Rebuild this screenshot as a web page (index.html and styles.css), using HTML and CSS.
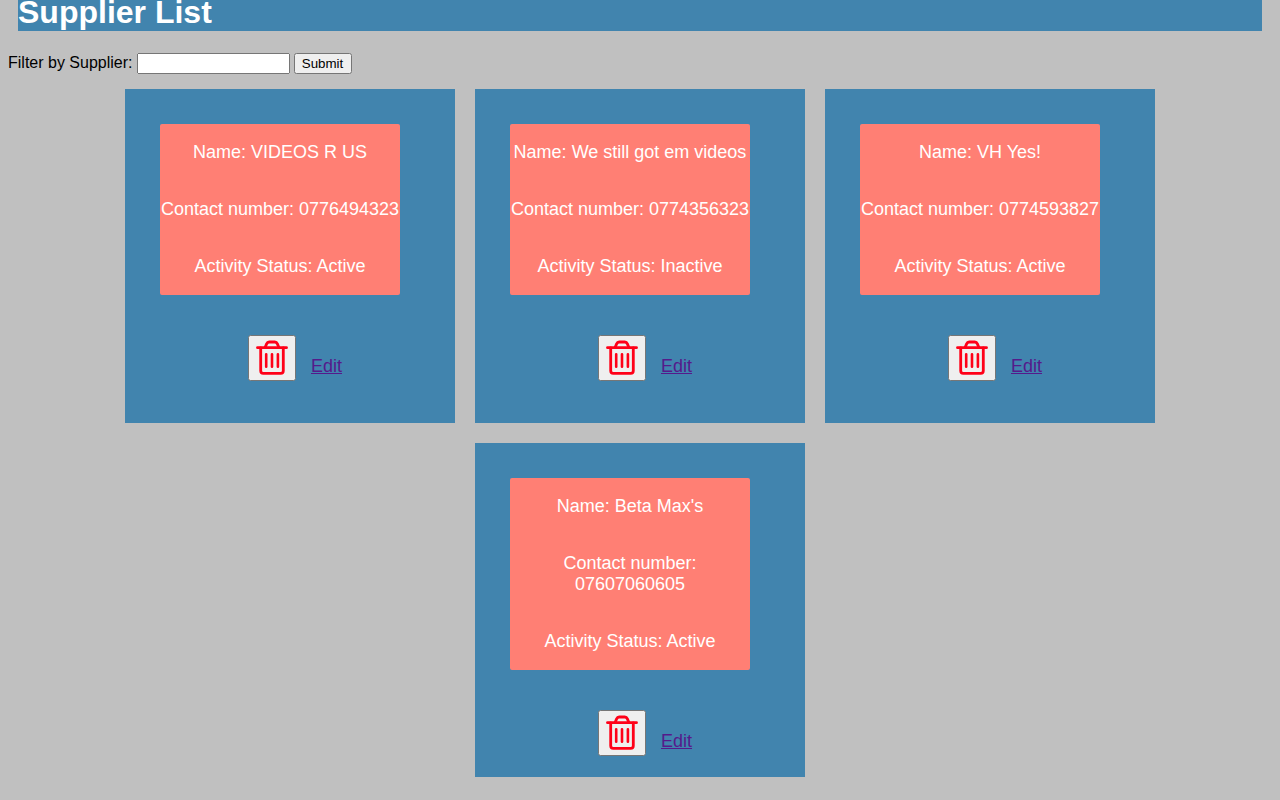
FILE: index.html
```html
<!DOCTYPE html>
<html lang="en">
<head>
<meta charset="utf-8">
<title>Supplier List</title>
<link rel="stylesheet" href="styles.css">
</head>
<body>
<svg class="sprite" aria-hidden="true">
  <symbol id="trash" viewBox="0 0 32 36">
    <g fill="none" stroke="#ff0018" stroke-linecap="round" stroke-width="2.8">
      <path d="M1.5 7.7H30.5"/>
      <path d="M9.2 7.2L10.6 3.9Q11.4 2 13.2 2H18.8Q20.6 2 21.400 3.900L22.800 7.200"/>
      <path d="M4.700 8V30.700Q4.700 33.300 7.300 33.300H24.700Q27.300 33.300 27.300 30.700V8"/>
      <path d="M10.200 14.300V26.800M16 14.300V26.800M21.900 14.300V26.800" stroke-width="2.600"/>
    </g>
  </symbol>
</svg>
<h1 class="page-title">Supplier List</h1>
<form class="filter">
  <label for="supplier">Filter by Supplier:</label>
  <input class="filter-input" id="supplier" type="text">
  <button class="filter-submit" type="button">Submit</button>
</form>
<main class="cards">
  <article class="card">
    <div class="details">
      <p>Name: VIDEOS R US</p>
      <p>Contact number: 0776494323</p>
      <p>Activity Status: Active</p>
    </div>
    <div class="actions">
      <button class="delete" type="button" aria-label="Delete"><svg class="icon"><use href="#trash"/></svg></button>
      <a class="edit" href="#">Edit</a>
    </div>
  </article>
  <article class="card">
    <div class="details">
      <p>Name: We still got em videos</p>
      <p>Contact number: 0774356323</p>
      <p>Activity Status: Inactive</p>
    </div>
    <div class="actions">
      <button class="delete" type="button" aria-label="Delete"><svg class="icon"><use href="#trash"/></svg></button>
      <a class="edit" href="#">Edit</a>
    </div>
  </article>
  <article class="card">
    <div class="details">
      <p>Name: VH Yes!</p>
      <p>Contact number: 0774593827</p>
      <p>Activity Status: Active</p>
    </div>
    <div class="actions">
      <button class="delete" type="button" aria-label="Delete"><svg class="icon"><use href="#trash"/></svg></button>
      <a class="edit" href="#">Edit</a>
    </div>
  </article>
  <article class="card">
    <div class="details">
      <p>Name: Beta Max's</p>
      <p>Contact number: 07607060605</p>
      <p>Activity Status: Active</p>
    </div>
    <div class="actions">
      <button class="delete" type="button" aria-label="Delete"><svg class="icon"><use href="#trash"/></svg></button>
      <a class="edit" href="#">Edit</a>
    </div>
  </article>
</main>
</body>
</html>
```

FILE: styles.css
```css
* {
  box-sizing: border-box;
}

body {
  margin: 0 8px;
  background: #c0c0c0;
  font-family: "Liberation Sans", Arial, sans-serif;
  font-size: 16px;
}

.sprite {
  display: none;
}

.page-title {
  margin: -6px 10px 22px;
  background: #4184ae;
  color: #fff;
  font-size: 32px;
  line-height: 37px;
}

.filter {
  display: flex;
  align-items: baseline;
  gap: 4px;
  margin-bottom: 15px;
}

.filter-input {
  width: 153px;
  height: 21px;
  font-family: inherit;
}

.filter-submit {
  width: 58px;
  height: 21px;
  font-family: inherit;
}

.cards {
  display: flex;
  flex-wrap: wrap;
  justify-content: center;
  gap: 20px;
}

.card {
  width: 330px;
  min-height: 334px;
  padding: 35px 35px 20px;
  background: #4184ae;
  font-size: 18px;
  line-height: 21px;
}

.details {
  display: flex;
  flex-direction: column;
  width: 240px;
  margin-bottom: 40px;
  border-radius: 2px;
  background: #ff7f74;
  color: #fff;
  text-align: center;
}

.details p {
  margin: 18px 0;
}

.actions {
  display: flex;
  justify-content: center;
  align-items: flex-end;
  gap: 15px;
  padding-left: 10px;
}

.delete {
  padding: 3px 6px;
}

.icon {
  display: block;
  width: 32px;
  height: 36px;
}

.edit {
  margin-bottom: 4px;
  color: #551a8b;
}
```
